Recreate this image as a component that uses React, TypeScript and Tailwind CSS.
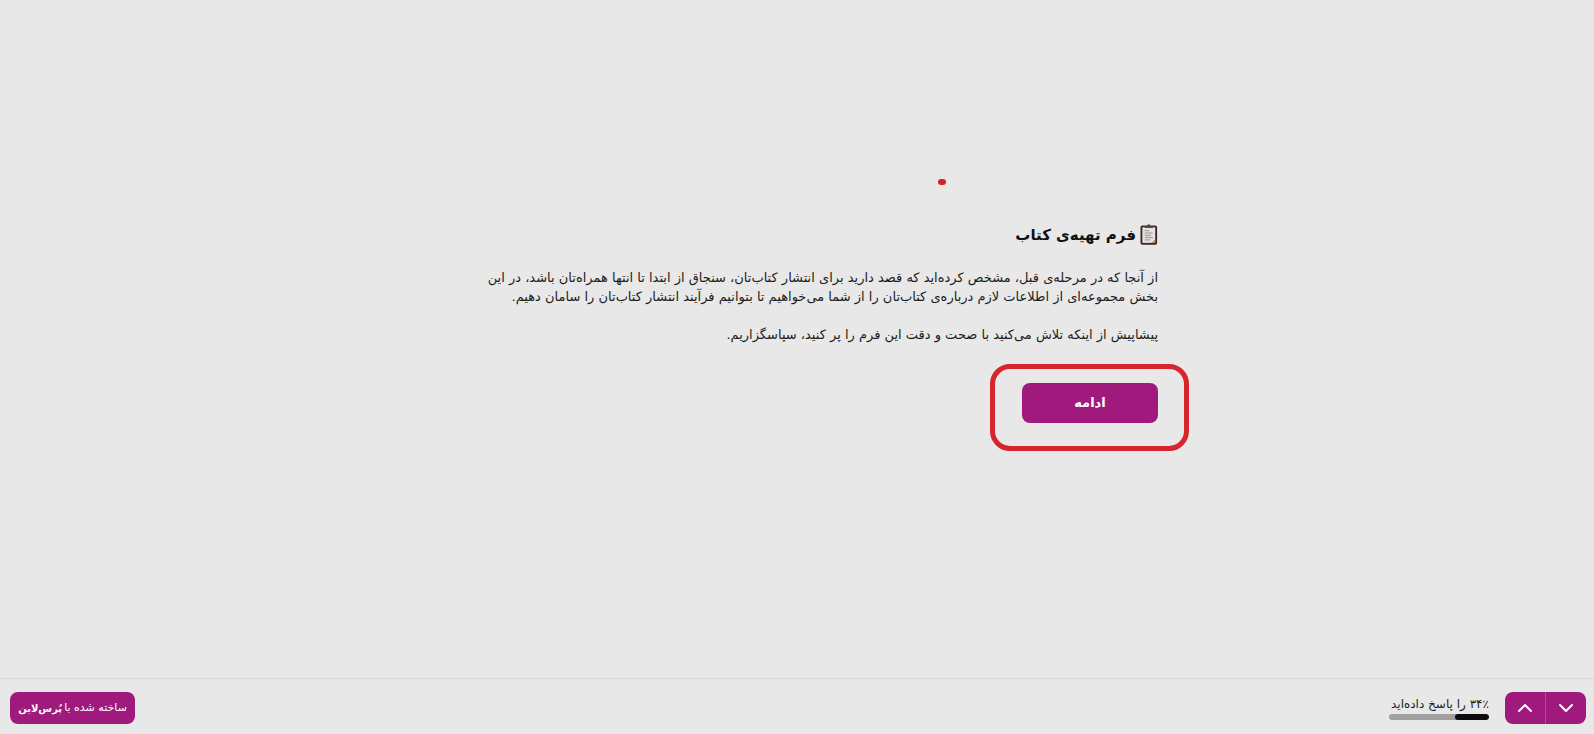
import type { ReactNode } from "react";
import { ChevronDown, ChevronUp } from "lucide-react";

const progress = 34;

const paragraphs = [
  [
    "از آنجا که در مرحله‌ی قبل، مشخص کرده‌اید که قصد دارید برای انتشار کتاب‌تان، سنجاق از ابتدا تا انتها همراه‌تان باشد، در این",
    "بخش مجموعه‌ای از اطلاعات لازم درباره‌ی کتاب‌تان را از شما می‌خواهیم تا بتوانیم فرآیند انتشار کتاب‌تان را سامان دهیم.",
  ],
  ["پیشاپیش از اینکه تلاش می‌کنید با صحت و دقت این فرم را پر کنید، سپاسگزاریم."],
];

function ClipboardIcon() {
  return (
    <svg width="18" height="22" viewBox="0 0 18 22" aria-hidden="true">
      <rect x="0.5" y="1.6" width="16.6" height="19.200" rx="1.8" fill="#3d2823" />
      <rect x="2.400" y="3.300" width="12.800" height="15.600" fill="#e6e4e3" />
      <path d="M15.200 15.200v3.700h-3.700z" fill="#b08a72" />
      <path d="M4.700 3.900V2.200h2.100C7 .9 7.800.2 8.800.2s1.800.7 2 2h2.100v1.700z" fill="#4b4c50" />
      <path d="M4.700 6.700h4.500M4.700 9h8.200M4.700 11.300h6.500M4.700 13.600h8.200M4.700 15.900h5.500" stroke="#8c8888" strokeWidth="0.9" />
    </svg>
  );
}

function NavButton({ label, children }: { label: string; children: ReactNode }) {
  return (
    <button type="button" aria-label={label} className="flex h-8 w-10 items-center justify-center">
      {children}
    </button>
  );
}

export default function App() {
  return (
    <div
      dir="rtl"
      lang="fa"
      className="flex min-h-screen flex-col bg-[#e8e8e8] font-['DejaVu_Sans',sans-serif] text-[#1c1c1c]"
    >
      <main className="flex flex-1 flex-col justify-center px-6 pb-8">
        <section className="relative mx-auto w-full max-w-[722px]">
          <span className="absolute -top-11 right-[212px] h-1.5 w-2 rounded-[3px] bg-[#cf2529]" />

          <h1 className="flex items-center gap-1 text-[15px] leading-6 font-bold text-[#111111]">
            <ClipboardIcon />
            فرم تهیه‌ی کتاب
          </h1>

          <div className="mt-[21px] flex flex-col gap-[19px] text-[13px] leading-[19px]">
            {paragraphs.map((lines) => (
              <p key={lines[0]}>
                {lines.map((line) => (
                  <span key={line} className="block md:whitespace-nowrap">
                    {line}
                  </span>
                ))}
              </p>
            ))}
          </div>

          <div className="relative mt-[39px] w-[136px]">
            <button
              type="button"
              className="h-10 w-full rounded-lg bg-[#9f1a7c] text-[13px] font-bold text-white"
            >
              ادامه
            </button>
            <span className="pointer-events-none absolute -top-[19px] -right-[31px] -bottom-7 -left-8 rounded-[20px] border-5 border-[#d7262b]" />
          </div>
        </section>
      </main>

      <footer className="flex h-14 items-start justify-between border-t border-[#d8d8d8] pt-[13px] pr-2 pl-2.5">
        <div className="flex items-center gap-4">
          <div className="flex overflow-hidden rounded-lg bg-[#9f1a7c] text-white">
            <NavButton label="بعدی">
              <ChevronDown size={24} />
            </NavButton>
            <span className="w-px bg-[#b548a0]" />
            <NavButton label="قبلی">
              <ChevronUp size={24} />
            </NavButton>
          </div>
          <div className="w-[100px] pb-0.5">
            <p className="text-[12px] leading-5 whitespace-nowrap">۳۴٪ را پاسخ داده‌اید</p>
            <div className="h-1.5 overflow-hidden rounded-full bg-[#a0a0a0]">
              <div className="h-full rounded-full bg-[#0c0c0c]" style={{ width: `${progress}%` }} />
            </div>
          </div>
        </div>

        <a
          href="#"
          className="flex h-8 w-[125px] items-center justify-center gap-0.5 rounded-lg bg-[#9f1a7c] text-[11px] whitespace-nowrap text-white"
        >
          ساخته شده با <strong className="text-[10px]">پُرس‌لاین</strong>
        </a>
      </footer>
    </div>
  );
}
